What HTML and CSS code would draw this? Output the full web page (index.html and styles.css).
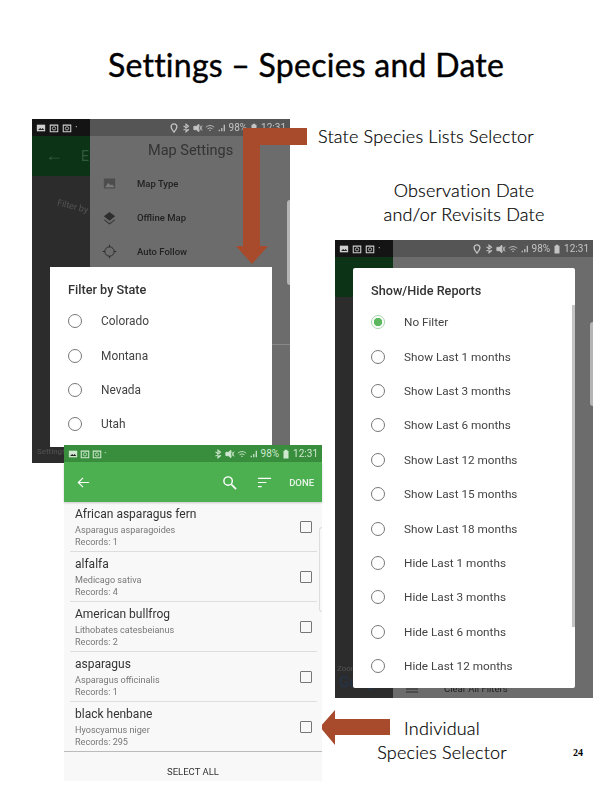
FILE: index.html
```html
<!DOCTYPE html>
<html lang="en">
    <head>
        <meta charset="UTF-8" />
        <title>Settings - Species and Date</title>
        <link rel="stylesheet" href="styles.css">
    </head>
    <body>
        <svg width="0" height="0" class="defs">
            <symbol id="pic" viewBox="0 0 12 12"><path d="M1 2h10v8H1z" fill="currentColor"/><path d="M2.500 8.500 5 6l1.500 1.500L8 6l2 2.500z" fill="#222"/></symbol>
            <symbol id="cam" viewBox="0 0 12 12"><path d="M1.500 2.500h9v8h-9z" fill="none" stroke="currentColor" stroke-width="1.300"/><circle cx="6" cy="6.500" r="2" fill="none" stroke="currentColor"/></symbol>
            <symbol id="pin" viewBox="0 0 12 12"><path d="M6 1a3.500 3.500 0 0 1 3.500 3.500C9.500 7 6 11 6 11S2.500 7 2.500 4.500A3.500 3.500 0 0 1 6 1z" fill="none" stroke="currentColor" stroke-width="1.600"/></symbol>
            <symbol id="bt" viewBox="0 0 12 12"><path d="M3 3.500 9 8 6 10.500v-9L9 4 3 8.500" fill="none" stroke="currentColor" stroke-width="1.300"/></symbol>
            <symbol id="mute" viewBox="0 0 12 12"><path d="M1 4h3l3-2.500v9L4 8H1zM8 3l3 6M11 3 8 9" fill="currentColor" stroke="currentColor"/></symbol>
            <symbol id="wifi" viewBox="0 0 12 12"><path d="M1 5q5-4 10 0M3 7q3-2.500 6 0M5 9q1-1 2 0" fill="none" stroke="currentColor"/></symbol>
            <symbol id="bars" viewBox="0 0 12 12"><path d="M2 8h1.500v2H2zM5 6h1.500v4H5zM8 2h1.500v8H8z" fill="currentColor"/></symbol>
            <symbol id="batt" viewBox="0 0 12 12"><path d="M4.500 1h3v1H9v9.500H3V2h1.500z" fill="currentColor"/></symbol>
        </svg>

        <div class="slide">
            <h1 class="title">Settings – Species and Date</h1>

            <!-- map settings phone, sits behind the state dialog -->
            <div class="phone phone-state">
                <div class="shade">
                    <div class="shade-head"><span class="back">←</span><span class="back-title">E</span></div>
                    <div class="shade-note">Filter by</div>
                    <div class="shade-foot">Settings</div>
                </div>
                <div class="drawer">
                    <div class="status status-clear">
                        <svg class="ic"><use href="#pin"/></svg>
                        <svg class="ic"><use href="#bt"/></svg>
                        <svg class="ic"><use href="#mute"/></svg>
                        <svg class="ic"><use href="#wifi"/></svg>
                        <svg class="ic"><use href="#bars"/></svg>
                        <span>98%</span>
                        <svg class="ic"><use href="#batt"/></svg>
                        <span>12:31</span>
                    </div>
                    <div class="drawer-title">Map Settings</div>
                    <div class="drawer-row">
                        <svg class="drawer-ic" viewBox="0 0 24 24"><path d="M3 4h18v16H3z" fill="#4d4d4d"/><path d="M5 18l5-7 4 4 2-2 4 5z" fill="#7a7a7a"/></svg>
                        <span>Map Type</span>
                    </div>
                    <div class="drawer-row">
                        <svg class="drawer-ic" viewBox="0 0 24 24"><path d="M12 3l9 7-9 7-9-7z" fill="#2e2e2e"/><path d="M4 15l8 6 8-6 1 1-9 7-9-7z" fill="#2e2e2e"/></svg>
                        <span>Offline Map</span>
                    </div>
                    <div class="drawer-row">
                        <svg class="drawer-ic" viewBox="0 0 24 24"><circle cx="12" cy="12" r="7.500" fill="none" stroke="#2e2e2e" stroke-width="1.600"/><path d="M12 1v4M12 19v4M1 12h4M19 12h4" stroke="#2e2e2e" stroke-width="1.600"/></svg>
                        <span>Auto Follow</span>
                    </div>
                    <div class="drawer-line"></div>
                </div>
                <div class="status status-left">
                    <svg class="ic"><use href="#pic"/></svg>
                    <svg class="ic"><use href="#cam"/></svg>
                    <svg class="ic"><use href="#cam"/></svg>
                    <span>·</span>
                </div>
                <div class="tab tab-state"></div>
            </div>
            <div class="dialog dialog-state">
                <div class="dialog-title">Filter by State</div>
                <div class="radio-row"><i class="radio"></i>Colorado</div>
                <div class="radio-row"><i class="radio"></i>Montana</div>
                <div class="radio-row"><i class="radio"></i>Nevada</div>
                <div class="radio-row"><i class="radio"></i>Utah</div>
            </div>

            <!-- reports phone -->
            <div class="phone phone-reports">
                <div class="shade">
                    <div class="shade-head"></div>
                    <div class="shade-google"><small>Zoom</small>Google</div>
                </div>
                <div class="drawer">
                    <div class="status status-clear">
                        <svg class="ic"><use href="#pin"/></svg>
                        <svg class="ic"><use href="#bt"/></svg>
                        <svg class="ic"><use href="#mute"/></svg>
                        <svg class="ic"><use href="#wifi"/></svg>
                        <svg class="ic"><use href="#bars"/></svg>
                        <span>98%</span>
                        <svg class="ic"><use href="#batt"/></svg>
                        <span>12:31</span>
                    </div>
                    <div class="drawer-foot">
                        <svg class="foot-ic" viewBox="0 0 12 8"><path d="M0 1h12M0 4h12M0 7h12" stroke="#2a2a2a"/></svg>
                        <span>Clear All Filters</span>
                    </div>
                </div>
                <div class="status status-left">
                    <svg class="ic"><use href="#pic"/></svg>
                    <svg class="ic"><use href="#cam"/></svg>
                    <svg class="ic"><use href="#cam"/></svg>
                    <span>·</span>
                </div>
                <div class="tab tab-reports"></div>
            </div>
            <div class="dialog dialog-reports">
                <div class="dialog-title">Show/Hide Reports</div>
                <div class="radio-row"><i class="radio on"></i>No Filter</div>
                <div class="radio-row"><i class="radio"></i>Show Last 1 months</div>
                <div class="radio-row"><i class="radio"></i>Show Last 3 months</div>
                <div class="radio-row"><i class="radio"></i>Show Last 6 months</div>
                <div class="radio-row"><i class="radio"></i>Show Last 12 months</div>
                <div class="radio-row"><i class="radio"></i>Show Last 15 months</div>
                <div class="radio-row"><i class="radio"></i>Show Last 18 months</div>
                <div class="radio-row"><i class="radio"></i>Hide Last 1 months</div>
                <div class="radio-row"><i class="radio"></i>Hide Last 3 months</div>
                <div class="radio-row"><i class="radio"></i>Hide Last 6 months</div>
                <div class="radio-row"><i class="radio"></i>Hide Last 12 months</div>
                <div class="scrollbar"></div>
            </div>

            <!-- species list phone, on top of the other two -->
            <div class="phone phone-species">
                <div class="status status-green">
                    <svg class="ic"><use href="#pic"/></svg>
                    <svg class="ic"><use href="#cam"/></svg>
                    <svg class="ic"><use href="#cam"/></svg>
                    <span>·</span>
                    <span class="grow"></span>
                    <svg class="ic"><use href="#bt"/></svg>
                    <svg class="ic"><use href="#mute"/></svg>
                    <svg class="ic"><use href="#wifi"/></svg>
                    <svg class="ic"><use href="#bars"/></svg>
                    <span>98%</span>
                    <svg class="ic"><use href="#batt"/></svg>
                    <span>12:31</span>
                </div>
                <div class="toolbar">
                    <svg class="tool-ic" viewBox="0 0 16 16"><path d="M14 8H2.500M7.500 3l-5 5 5 5" fill="none" stroke="#fff" stroke-width="1.300"/></svg>
                    <span class="grow"></span>
                    <svg class="tool-ic" viewBox="0 0 16 16"><circle cx="6.500" cy="6.500" r="4.500" fill="none" stroke="#fff" stroke-width="1.500"/><path d="M10 10l5 5" stroke="#fff" stroke-width="1.800"/></svg>
                    <svg class="tool-ic sort" viewBox="0 0 16 16"><path d="M1 3.500h14M1 8h9M1 12.500h4" stroke="#fff" stroke-width="1.300"/></svg>
                    <span class="done">DONE</span>
                </div>
                <div class="species">
                    <div class="species-row">
                        <div class="species-text"><b>African asparagus fern</b><span>Asparagus asparagoides</span><span>Records: 1</span></div>
                        <i class="check"></i>
                    </div>
                    <div class="species-row">
                        <div class="species-text"><b>alfalfa</b><span>Medicago sativa</span><span>Records: 4</span></div>
                        <i class="check"></i>
                    </div>
                    <div class="species-row">
                        <div class="species-text"><b>American bullfrog</b><span>Lithobates catesbeianus</span><span>Records: 2</span></div>
                        <i class="check"></i>
                    </div>
                    <div class="species-row">
                        <div class="species-text"><b>asparagus</b><span>Asparagus officinalis</span><span>Records: 1</span></div>
                        <i class="check"></i>
                    </div>
                    <div class="species-row">
                        <div class="species-text"><b>black henbane</b><span>Hyoscyamus niger</span><span>Records: 295</span></div>
                        <i class="check"></i>
                    </div>
                </div>
                <div class="select-all">SELECT ALL</div>
                <div class="tab tab-species"></div>
            </div>

            <svg class="arrows" viewBox="0 0 612 792">
                <path d="M307 128H243V246H236L252 264L268 246H260V145H307z" fill="#a84a2c"/>
                <path d="M320 727L335 710V719H390V735H335V745z" fill="#a84a2c"/>
            </svg>

            <div class="note note-state">State Species Lists Selector</div>
            <div class="note note-date">Observation Date<br>and/or Revisits Date</div>
            <div class="note note-species">Individual<br>Species Selector</div>
            <div class="page-no">24</div>
        </div>
    </body>
</html>
```

FILE: styles.css
```css
html, body {
    margin: 0;
    background: #fff;
}
.defs {
    position: absolute;
}
.slide {
    position: relative;
    width: 612px;
    height: 792px;
    overflow: hidden;
    font-family: Roboto, sans-serif;
}
.title {
    margin: 0;
    padding-top: 45px;
    text-align: center;
    font: 400 32px/40px Lato, sans-serif;
    letter-spacing: 0.25px;
    color: #000;
    -webkit-text-stroke: 0.4px #000;
}
.grow {
    flex: 1;
}

/* phones are placed on the slide like pictures */
.phone {
    position: absolute;
    width: 258px;
    display: flex;
    filter: blur(0.35px);
}
.phone-state {
    left: 32px;
    top: 119px;
    height: 344px;
}
.phone-reports {
    left: 335px;
    top: 240px;
    height: 458px;
}
.phone-species {
    left: 64px;
    top: 445px;
    height: 336px;
    flex-direction: column;
    background: #f8f8f8;
    z-index: 3;
}

.shade {
    width: 58px;
    background: #2c2c2c;
    display: flex;
    flex-direction: column;
    overflow: hidden;
}
.shade-head {
    height: 57px;
    background: #0d3316;
    display: flex;
    color: #2f5c3a;
    font-size: 18px;
    line-height: 18px;
}
.back {
    padding: 27px 0 0 13px;
}
.back-title {
    padding: 28px 0 0 18px;
    font-size: 14px;
}
.shade-note {
    padding: 22px 0 0 28px;
    font-size: 9px;
    color: #555;
    transform: rotate(14deg);
    white-space: nowrap;
}
.shade-foot {
    margin-top: auto;
    padding: 0 0 6px 5px;
    font-size: 8px;
    line-height: 10px;
    color: #555;
}
.shade-google {
    margin-top: auto;
    padding: 0 0 8px 4px;
    font-size: 15px;
    line-height: 15px;
    color: #24344d;
}
.shade-google small {
    display: block;
    margin-left: -2px;
    padding-bottom: 2px;
    font-size: 8px;
    line-height: 8px;
    color: #555;
}
.drawer {
    flex: 1;
    background: #6c6c6c;
    display: flex;
    flex-direction: column;
    overflow: hidden;
}
.status {
    height: 17px;
    display: flex;
    align-items: center;
    gap: 2px;
    padding: 0 4px;
    font-size: 10px;
    flex-shrink: 0;
}
.status-clear {
    justify-content: flex-end;
    background: #555;
    color: #c4c4c4;
}
.status-left {
    position: absolute;
    left: 0;
    top: 0;
    width: 58px;
    gap: 3px;
    background: #141414;
    color: #cfcfcf;
    box-sizing: border-box;
}
.status-green {
    background: #388e3c;
    color: #cfe8d0;
}
.ic {
    width: 10px;
    height: 10px;
}
.drawer-title {
    padding: 6px 0 0 58px;
    font-size: 14.500px;
    line-height: 18px;
    color: #333;
}
.drawer-row {
    height: 34px;
    display: flex;
    align-items: center;
    gap: 20px;
    padding-left: 12px;
    font-size: 9.500px;
    font-weight: 500;
    color: #222;
}
.drawer-row:nth-child(3) {
    margin-top: 6px;
}
.drawer-ic {
    width: 15px;
    height: 15px;
    flex-shrink: 0;
}
.drawer-line {
    height: 1px;
    margin-top: 76px;
    background: #888;
}
.drawer-foot {
    margin-top: auto;
    padding: 0 0 3px 13px;
    display: flex;
    align-items: center;
    gap: 26px;
    font-size: 9.500px;
    line-height: 12px;
    color: #222;
}
.foot-ic {
    width: 12px;
    height: 8px;
}
.tab {
    position: absolute;
    box-sizing: border-box;
    border-radius: 3px 0 0 3px;
}
.tab-state {
    right: 0;
    top: 81px;
    width: 3px;
    height: 85px;
    background: #b5b5b5;
}
.tab-reports {
    right: 0;
    top: 82px;
    width: 3px;
    height: 84px;
    background: #b5b5b5;
}
.tab-species {
    right: 0;
    top: 82px;
    width: 3px;
    height: 85px;
    border: 1px solid #ddd;
    border-right: 0;
}

/* dialogs */
.dialog {
    position: absolute;
    width: 222px;
    background: #fff;
    box-sizing: border-box;
    overflow: hidden;
    filter: blur(0.3px);
}
.dialog-state {
    left: 50px;
    top: 267px;
    height: 180px;
    z-index: 1;
}
.dialog-reports {
    left: 353px;
    top: 268px;
    height: 420px;
    border-radius: 2px;
    z-index: 1;
}
.dialog-title {
    padding: 15px 0 0 18px;
    height: 22px;
    font-size: 12.700px;
    font-weight: 500;
    line-height: 16px;
    color: #333;
}
.radio-row {
    height: 34.400px;
    display: flex;
    align-items: center;
    padding-left: 18px;
    font-size: 11.750px;
    color: #444;
    white-space: nowrap;
}
.dialog-state .radio-row {
    font-size: 11.900px;
}
.radio {
    width: 12px;
    height: 12px;
    border: 1.500px solid #777;
    border-radius: 50%;
    margin-right: 19px;
    flex-shrink: 0;
}
.radio.on {
    border-color: #a5d6a7;
    background: radial-gradient(circle, #5cb85c 0 4px, #fff 4.500px);
}
.scrollbar {
    position: absolute;
    right: 0;
    top: 37px;
    width: 3px;
    height: 322px;
    background: #c4c4c4;
}

/* species list */
.toolbar {
    height: 40px;
    display: flex;
    align-items: center;
    padding: 0 8px 0 12px;
    background: #4caf50;
    box-shadow: 0 1px 2px #0003;
    flex-shrink: 0;
}
.tool-ic {
    width: 15px;
    height: 15px;
}
.sort {
    margin: 0 17px 0 20px;
}
.done {
    color: #e8f5e9;
    font-size: 9.500px;
    font-weight: 500;
}
.species {
    flex: 1;
    overflow: hidden;
}
.species-row {
    height: 49px;
    display: flex;
    align-items: center;
    margin: 0 5px 0 6px;
    padding: 0 5px 0 5px;
    border-bottom: 1px solid #ddd;
}
.species-row:last-child {
    border-bottom: 0;
}
.species-text {
    flex: 1;
    display: flex;
    flex-direction: column;
    padding-bottom: 2px;
    font-size: 9.100px;
    line-height: 12px;
    color: #777;
}
.species-text b {
    font-weight: 400;
    font-size: 12px;
    line-height: 20px;
    color: #333;
}
.check {
    width: 10px;
    height: 10px;
    border: 1.500px solid #777;
    border-radius: 1px;
}
.select-all {
    height: 30px;
    box-sizing: border-box;
    padding-top: 10px;
    line-height: 19px;
    text-align: center;
    border-top: 1px solid #bbb;
    font-size: 9.500px;
    color: #333;
    flex-shrink: 0;
}

/* annotations */
.arrows {
    position: absolute;
    left: 0;
    top: 0;
    width: 612px;
    height: 792px;
    z-index: 2;
}
.note {
    position: absolute;
    z-index: 4;
    font: 300 18px/24px Lato, sans-serif;
    letter-spacing: 0.2px;
    color: #000;
    -webkit-text-stroke: 0.2px #000;
    text-align: center;
    white-space: nowrap;
}
.note-state {
    left: 318px;
    top: 124px;
}
.note-date {
    left: 364px;
    top: 178px;
    width: 200px;
}
.note-species {
    left: 342px;
    top: 716px;
    width: 200px;
}
.page-no {
    position: absolute;
    left: 573px;
    top: 747px;
    font: 700 10px/12px "Liberation Serif", serif;
    color: #000;
}
```
